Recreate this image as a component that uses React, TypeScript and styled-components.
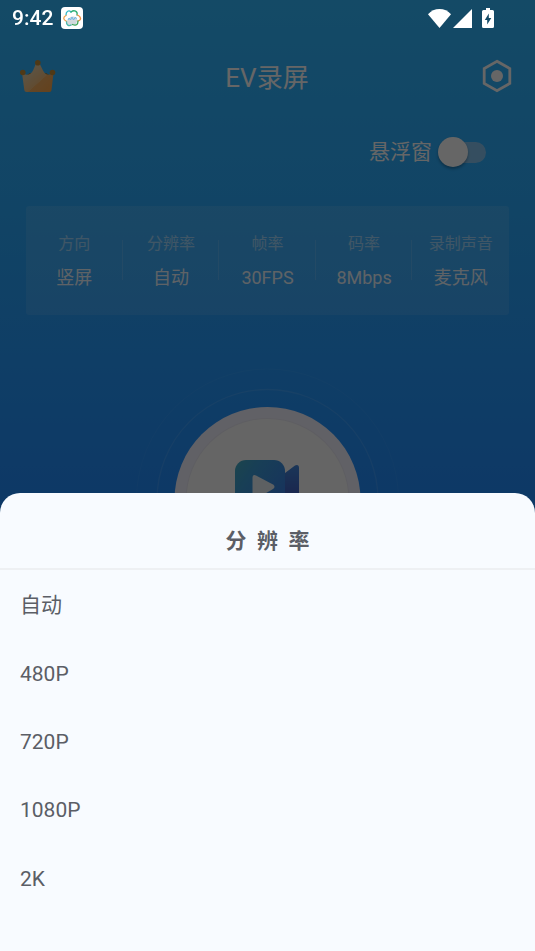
import React from 'react';
import styled, { createGlobalStyle } from 'styled-components';

const GlobalStyle = createGlobalStyle`
  *, *::before, *::after { box-sizing: border-box; }
  body {
    margin: 0;
    font-family: Roboto, "Noto Sans CJK SC", sans-serif;
    background: #2186ff;
  }
  button, input { font: inherit; }
`;

const Page = styled.div`
  min-height: 100vh;
  background: linear-gradient(180deg, #32b9ff 0%, #2ba9fd 24%, #228eff 52%, #1e80ff 100%);
  color: #fff;
`;

const StatusBar = styled.header`
  position: relative;
  z-index: 3;
  display: flex;
  align-items: center;
  justify-content: space-between;
  height: 36px;
  padding: 0 41px 0 12px;
`;

const StatusGroup = styled.div<{ $gap: number }>`
  display: flex;
  align-items: center;
  gap: ${(p) => p.$gap}px;
`;

const Clock = styled.time`
  font-size: 21px;
  font-weight: 500;
  line-height: 24px;
`;

const AppBar = styled.div`
  display: grid;
  grid-template-columns: 1fr auto 1fr;
  align-items: center;
  height: 84px;
  padding: 0 21px 0 20px;
`;

const IconButton = styled.button<{ $end?: boolean }>`
  display: flex;
  justify-self: ${(p) => (p.$end ? 'end' : 'start')};
  padding: 0 0 4px;
  border: 0;
  background: none;
  color: inherit;
`;

const AppTitle = styled.h1`
  margin: 0;
  font-size: 26px;
  font-weight: 400;
  line-height: 36px;
`;

const FloatRow = styled.label`
  display: flex;
  align-items: center;
  justify-content: flex-end;
  gap: 6px;
  height: 64px;
  padding-right: 49px;
  font-size: 21px;
  line-height: 32px;
`;

const Switch = styled.input`
  appearance: none;
  position: relative;
  display: flex;
  align-items: center;
  width: 48px;
  height: 30px;
  margin: 0;

  &::before {
    content: '';
    flex: 1;
    height: 21px;
    margin-left: 8px;
    border-radius: 11px;
    background: #90c6ee;
    opacity: 0.9;
  }
  &::after {
    content: '';
    position: absolute;
    left: 0;
    top: 0;
    width: 30px;
    height: 30px;
    border-radius: 50%;
    background: #fff;
    box-shadow: 0 2px 3px rgba(0, 0, 0, 0.3);
  }
  &:checked::after { left: auto; right: 0; }
`;

const SettingsCard = styled.section`
  display: grid;
  grid-template-columns: repeat(5, 1fr);
  margin: 22px 26px 0;
  padding: 26px 0 23px;
  border-radius: 3px;
  background: rgba(255, 255, 255, 0.1);
`;

const Setting = styled.button`
  position: relative;
  display: flex;
  flex-direction: column;
  align-items: center;
  gap: 8px;
  padding: 0;
  border: 0;
  background: none;
  color: #fff;
  white-space: nowrap;

  & + &::before {
    content: '';
    position: absolute;
    left: -1px;
    top: 8px;
    width: 1px;
    height: 40px;
    background: rgba(255, 255, 255, 0.13);
  }
`;

const SettingName = styled.span`
  font-size: 16px;
  line-height: 24px;
  opacity: 0.5;
`;

const SettingValue = styled.span`
  font-size: 18px;
  line-height: 28px;
  opacity: 0.9;
`;

const RecordButton = styled.button`
  display: block;
  margin: 51px auto 0;
  padding: 0;
  border: 0;
  background: none;
`;

const Scrim = styled.div`
  position: fixed;
  inset: 0;
  z-index: 2;
  background: rgba(0, 0, 0, 0.6);
`;

const Sheet = styled.section`
  position: fixed;
  left: 0;
  right: 0;
  bottom: 0;
  z-index: 4;
  padding-bottom: 38px;
  border-radius: 20px 20px 0 0;
  background: #f8fbff;
  color: #5b5e66;
`;

const SheetTitle = styled.h2`
  margin: 0;
  padding: 32px 0 11px;
  border-bottom: 2px solid #eef0f3;
  font-size: 21px;
  font-weight: 700;
  line-height: 32px;
  text-align: center;
  white-space: pre;
`;

const OptionList = styled.ul`
  display: grid;
  grid-auto-rows: 1fr;
  min-height: 342px;
  margin: 1px 0 0;
  padding: 0;
  list-style: none;
`;

const Option = styled.button`
  width: 100%;
  height: 100%;
  padding: 0 20px;
  border: 0;
  background: none;
  color: inherit;
  font-size: 21px;
  line-height: 32px;
  text-align: left;
`;

const AppBadge = () => (
  <svg width="22" height="22" viewBox="0 0 22 22" aria-hidden="true">
    <rect width="22" height="22" rx="4" fill="#fff" />
    <path d="M6 15c0-2 1-3 2-3 1-3 5-3 7-1 2 1 2 4 0 5 1 2-1 3-3 2-1 1-3 1-4 0-2 0-3-1-2-3z" fill="#d3d9dd" />
    <g fill="none" strokeWidth="1.3" strokeLinecap="round">
      <path d="M5 8C5 4 8 3 10 5" stroke="#35b9c8" />
      <path d="M10 5C13 2.500 17 4 16 8" stroke="#2fae74" />
      <path d="M16.500 8C20.500 10 20.500 13 17 14" stroke="#ef8b3c" />
      <path d="M17 14C17 18 15 19 11.500 17.500" stroke="#3aa655" />
      <path d="M10 18C8 19.500 5 18 5.500 14.500" stroke="#4db9ac" />
      <path d="M5 14C2 12.500 2 10 5 8.500" stroke="#f0a04c" />
    </g>
    <path d="M7 13l1-2 1.500 2 1.500-3 1.500 3 2-3 1 2" fill="none" stroke="#6fb8ea" />
  </svg>
);

const WifiIcon = () => (
  <svg width="23" height="19" viewBox="0 0 23 19" aria-hidden="true">
    <path d="M11.500 19L0 5.200C3 1.800 7 0 11.500 0S20 1.800 23 5.200z" fill="#fff" />
  </svg>
);

const SignalIcon = () => (
  <svg width="19" height="19" viewBox="0 0 19 19" aria-hidden="true">
    <path d="M19 0v19H0z" fill="#fff" />
  </svg>
);

const BatteryIcon = () => (
  <svg width="12" height="20" viewBox="0 0 12 20" aria-hidden="true">
    <path d="M4 0h4v2h2.500Q12 2 12 3.500v15Q12 20 10.500 20h-9Q0 20 0 18.500v-15Q0 2 1.500 2H4z" fill="#fff" />
    <path d="M6.800 5.500v4.500h2.500L5.200 16.500V12H2.800z" fill="#134a66" />
  </svg>
);

const CrownIcon = () => (
  <svg width="36" height="33" viewBox="0 0 36 33" aria-hidden="true">
    <defs>
      <linearGradient id="crown" x1="0" y1="0" x2="1" y2="1">
        <stop offset="0" stopColor="#f0d2a0" />
        <stop offset="0.35" stopColor="#eacb9c" />
        <stop offset="0.59" stopColor="#f2bd7c" />
        <stop offset="0.6" stopColor="#f5ae60" />
        <stop offset="1" stopColor="#fba548" />
      </linearGradient>
    </defs>
    <path d="M7 15l3-2 3 2zM23 15l3-2 3 2z" fill="#a97225" />
    <path d="M2 13C6 16 11 15 13 10.500L15.800 4h4L23 10.500C25 15 29 16 33.500 13L31.500 30Q31.300 32 29.500 32h-23Q4.500 32 4.300 30z" fill="url(#crown)" />
    <g fill="#c68f38">
      <circle cx="17.800" cy="2.800" r="2.800" />
      <circle cx="2.800" cy="12.500" r="2.800" />
      <circle cx="32.500" cy="12.500" r="2.800" />
    </g>
  </svg>
);

const HexIcon = () => (
  <svg width="34" height="34" viewBox="0 0 34 34" aria-hidden="true">
    <path d="M17 2.300L29.800 9.600v14.800L17 31.700 4.200 24.400V9.600z" fill="none" stroke="#fff" strokeWidth="2.800" />
    <circle cx="17" cy="17" r="6" fill="#fff" />
  </svg>
);

const RecordArt = () => (
  <svg width="268" height="268" viewBox="0 0 268 268" aria-hidden="true">
    <defs>
      <linearGradient id="lens" x1="0" y1="0" x2="0.9" y2="0.9">
        <stop offset="0" stopColor="#46acc0" />
        <stop offset="0.3" stopColor="#3c9cd8" />
        <stop offset="1" stopColor="#3a78ec" />
      </linearGradient>
      <linearGradient id="flap" x1="0" y1="0" x2="0" y2="1">
        <stop offset="0" stopColor="#4488dc" />
        <stop offset="0.35" stopColor="#4168c8" />
        <stop offset="1" stopColor="#4168c8" />
      </linearGradient>
    </defs>
    <g fill="none" stroke="#fff">
      <circle cx="133.500" cy="134" r="131" strokeOpacity="0.04" />
      <circle cx="133.500" cy="134" r="110.500" strokeOpacity="0.1" strokeWidth="1.300" />
    </g>
    <circle cx="133.500" cy="134" r="93" fill="#f3f2ff" />
    <circle cx="133.500" cy="134" r="82" fill="#ecebf5" />
    <circle cx="133.500" cy="134" r="81" fill="#fcfdfd" />
    <path d="M151 107L161 99.500Q165 98 165 102V165Q165 168 161 166L145 154V107z" fill="url(#flap)" />
    <rect x="101" y="94" width="50" height="74" rx="11" fill="url(#lens)" />
    <path d="M118.500 112Q118.500 108 122 109.500L139 118.500Q142 120.500 139 123L122 133Q118.500 134 118.500 131z" fill="#e8f0f5" />
  </svg>
);

const settings = [
  { name: '方向', value: '竖屏' },
  { name: '分辨率', value: '自动' },
  { name: '帧率', value: '30FPS' },
  { name: '码率', value: '8Mbps' },
  { name: '录制声音', value: '麦克风' },
];

const resolutions = ['自动', '480P', '720P', '1080P', '2K'];

export default function App() {
  return (
    <>
      <GlobalStyle />
      <Page>
        <StatusBar>
          <StatusGroup $gap={8}>
            <Clock>9:42</Clock>
            <AppBadge />
          </StatusGroup>
          <StatusGroup $gap={2}>
            <WifiIcon />
            <StatusGroup $gap={10}>
              <SignalIcon />
              <BatteryIcon />
            </StatusGroup>
          </StatusGroup>
        </StatusBar>
        <main>
          <AppBar>
            <IconButton type="button" aria-label="VIP">
              <CrownIcon />
            </IconButton>
            <AppTitle>EV录屏</AppTitle>
            <IconButton type="button" aria-label="设置" $end>
              <HexIcon />
            </IconButton>
          </AppBar>
          <FloatRow>
            悬浮窗
            <Switch type="checkbox" role="switch" />
          </FloatRow>
          <SettingsCard>
            {settings.map((s) => (
              <Setting type="button" key={s.name}>
                <SettingName>{s.name}</SettingName>
                <SettingValue>{s.value}</SettingValue>
              </Setting>
            ))}
          </SettingsCard>
          <RecordButton type="button" aria-label="录制">
            <RecordArt />
          </RecordButton>
        </main>
      </Page>
      <Scrim />
      <Sheet role="dialog" aria-labelledby="sheet-title">
        <SheetTitle id="sheet-title">{'分  辨  率'}</SheetTitle>
        <OptionList>
          {resolutions.map((r) => (
            <li key={r}>
              <Option type="button">{r}</Option>
            </li>
          ))}
        </OptionList>
      </Sheet>
    </>
  );
}
